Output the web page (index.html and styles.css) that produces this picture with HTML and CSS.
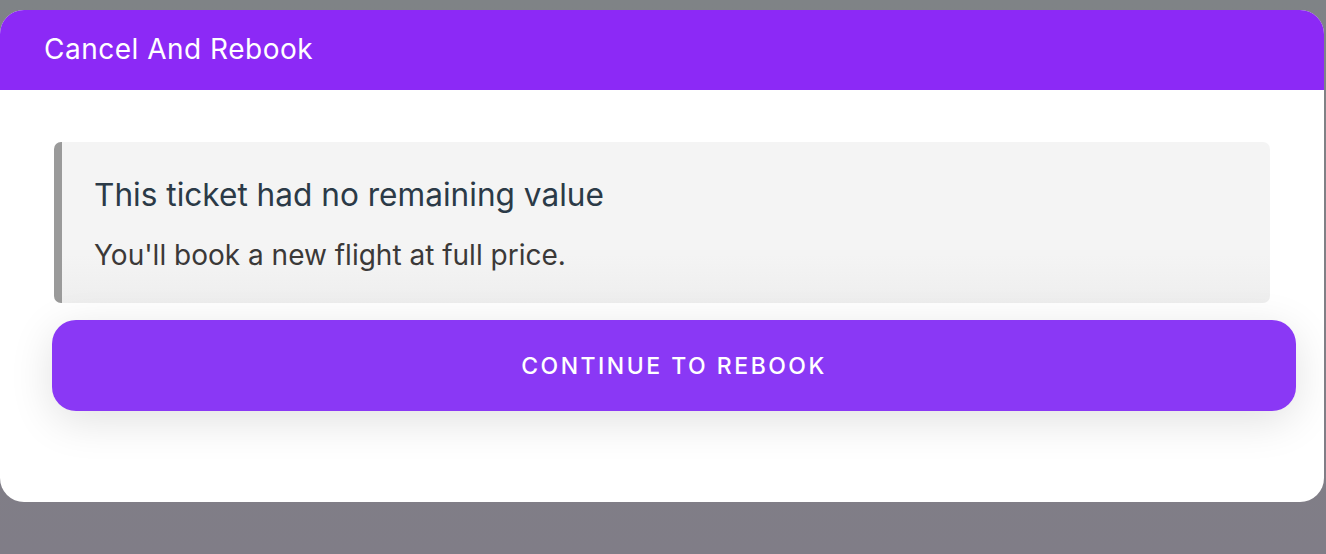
FILE: index.html
```html
<!DOCTYPE html>
<html lang="en">
<head>
    <meta charset="UTF-8">
    <meta name="viewport" content="width=device-width, initial-scale=1.0">
    <title>Cancel And Rebook</title>
    <link rel="stylesheet" href="styles.css">
</head>
<body>
    <div class="modal">
        <div class="modal-header">
            <h2>Cancel And Rebook</h2>
        </div>

        <div class="modal-body">
            <div class="notice">
                <h3>This ticket had no remaining value</h3>
                <p>You'll book a new flight at full price.</p>
            </div>

            <button class="rebook-btn" type="button">Continue to rebook</button>
        </div>
    </div>
</body>
</html>
```

FILE: styles.css
```css
body {
    font-family: Inter, "Noto Sans", sans-serif;
    margin: 0;
    padding: 10px 2px 0 0;
    height: 554px;
    box-sizing: border-box;
    background: linear-gradient(180deg, #7f8386 0%, #807f86 60%, #807d87 100%);
    overflow: hidden;
}

.modal {
    background-color: white;
    border-radius: 24px;
    overflow: hidden;
    height: 492px;
}

.modal-header {
    background-color: #8c29f6;
    height: 80px;
    box-sizing: border-box;
    padding: 22px 0 0 44px;
}

.modal-header h2 {
    margin: 0;
    color: white;
    font-size: 28px;
    line-height: 34px;
    font-weight: 400;
    letter-spacing: 0.5px;
}

.modal-body {
    padding: 52px 28px 0 52px;
}

.notice {
    margin: 0 26px 0 2px;
    background: linear-gradient(180deg, #f4f4f4 0%, #f4f4f4 70%, #eeeeee 100%);
    border-left: 8px solid #9a9a9a;
    border-radius: 7px;
    padding: 34px 33px 0 32px;
    height: 161px;
    box-sizing: border-box;
}

.notice h3 {
    margin: 0 0 24px;
    color: #2b3a47;
    font-size: 31.6px;
    line-height: 38px;
    font-weight: 400;
}

.notice p {
    margin: 0;
    color: #3b3938;
    font-size: 28px;
    line-height: 34px;
}

.rebook-btn {
    display: block;
    width: 100%;
    height: 91px;
    margin-top: 17px;
    border: none;
    border-radius: 24px;
    background-color: #8a38f5;
    color: white;
    font-family: inherit;
    font-size: 23px;
    font-weight: 500;
    letter-spacing: 2.5px;
    text-transform: uppercase;
    box-shadow: 0 10px 44px rgba(0,0,0,0.12);
}
```
